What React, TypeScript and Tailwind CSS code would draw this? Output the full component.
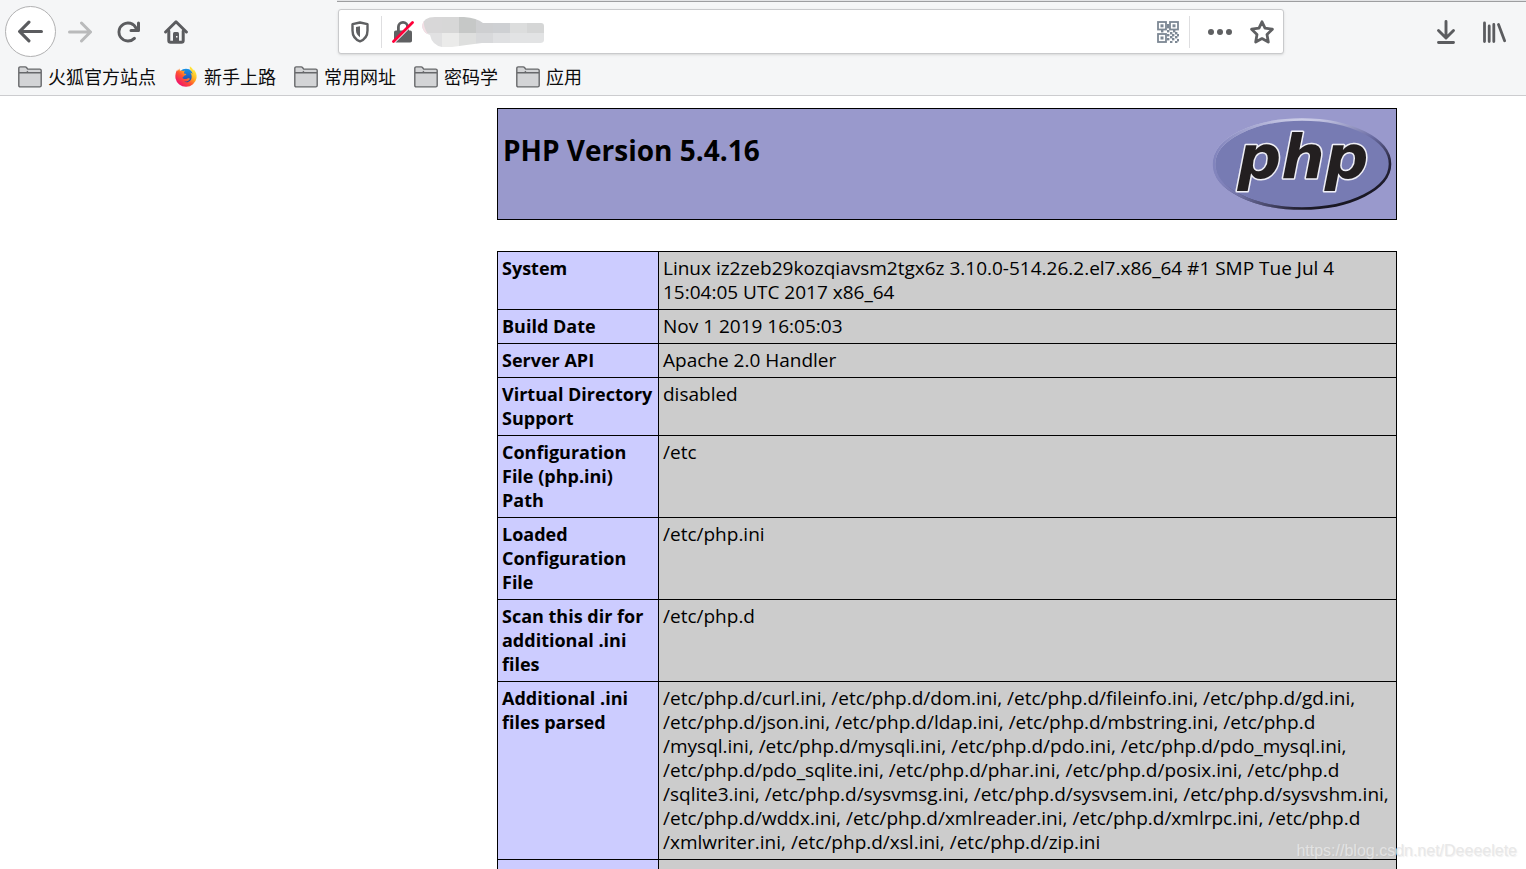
import type { ReactNode } from "react";

const BACK =
  "M15 7H3.414l4.293-4.293a1 1 0 0 0-1.414-1.414l-6 6a1 1 0 0 0 0 1.414l6 6a1 1 0 0 0 1.414-1.414L3.414 9H15a1 1 0 0 0 0-2z";
const RELOAD =
  "M15 1a1 1 0 0 0-1 1v2.418A6.995 6.995 0 1 0 8 15a6.954 6.954 0 0 0 4.95-2.05 1 1 0 0 0-1.414-1.414A5.019 5.019 0 1 1 12.549 6H10a1 1 0 0 0 0 2h5a1 1 0 0 0 1-1V2a1 1 0 0 0-1-1z";

function ToolButton({ label, children }: { label: string; children: ReactNode }) {
  return (
    <button type="button" aria-label={label} className="flex h-12 w-12 shrink-0 items-center justify-center text-[#5b5c5f]">
      {children}
    </button>
  );
}

function FolderIcon() {
  return (
    <svg width="24" height="24" viewBox="0 -2 24 24" fill="#d3d4d6" stroke="#67686b" strokeWidth="1.4" strokeLinejoin="round">
      <path d="M.8 19.500V2.300Q.8.900 2.200.900H7.200Q8 .9 8.500 1.500L9.700 3.100H21.800Q23.200 3.100 23.200 4.500V19.500Q23.200 20.900 21.800 20.900H2.200Q.8 20.900.8 19.500Z" />
      <path d="M1 6.800H7.500Q8.400 6.800 9 6.200L9.800 5.200M8 6.800H23" fill="none" />
    </svg>
  );
}

function FirefoxIcon() {
  return (
    <svg width="24" height="24" viewBox="-0.500 -1.500 25 25">
      <defs>
        <linearGradient id="fox" x1="0.85" y1="0.1" x2="0.15" y2="0.85">
          <stop offset="0" stopColor="#fff044" />
          <stop offset="0.35" stopColor="#ffb020" />
          <stop offset="0.62" stopColor="#ff5530" />
          <stop offset="1" stopColor="#f0146a" />
        </linearGradient>
        <linearGradient id="globe" x1="0" y1="0" x2="0" y2="1">
          <stop offset="0" stopColor="#1593e6" />
          <stop offset="1" stopColor="#2b2f9a" />
        </linearGradient>
      </defs>
      <circle cx="12" cy="12" r="8.500" fill="url(#globe)" />
      <path
        fill="url(#fox)"
        d="M16 .8C18 2 19 3.600 19.600 5.200C20 4.800 20 4.400 20 4C22.300 6.500 23.500 9.600 23 13A11.200 11.200 0 0 1 1 13.400C.6 9.800 1.400 6.500 3 4.200L3.300 6L5 3.300L5.700 5.500C7 5 8.500 5.200 9.400 5.700L11 5.300C10.200 6.300 9.800 7.200 9.800 8.400L12.300 8.900C12.300 10 10.600 10.400 9.900 11C9.700 12 8.700 12.200 8.300 12.700C9.400 14.600 12 14.300 13.600 13.500C15 13 16 13.500 16 14.100C14.500 16.500 11.500 17.200 9.600 16.500C13.500 19 18 16.500 17.900 11.500C17.900 9.500 17 8.200 16.300 7.300C17.800 7.800 18.600 8.500 19 9.200C18.500 6 15.200 4.500 16 .8Z"
      />
    </svg>
  );
}

function Bookmark({ label, icon }: { label: string; icon: ReactNode }) {
  return (
    <a href="#" className="flex items-center gap-[6px] whitespace-nowrap">
      {icon}
      {label}
    </a>
  );
}

function ShieldIcon() {
  return (
    <svg width="18" height="22" viewBox="0 0 18 22" fill="none">
      <path d="M9 1.500L16.500 3.200V9.500C16.500 14.800 13.200 18.700 9 20.400C4.800 18.700 1.500 14.800 1.500 9.500V3.200Z" stroke="#5f6062" strokeWidth="2.400" strokeLinejoin="round" />
      <path d="M9 5.200V16.200C6.500 14.500 5 12.200 5 9.500V6.100Z" fill="#5f6062" />
    </svg>
  );
}

function InsecureIcon() {
  return (
    <svg width="22" height="22" viewBox="0 0 22 22" fill="none">
      <path d="M6.400 10V6A4.600 4.600 0 0 1 15.600 6V10" stroke="#5f6062" strokeWidth="2.800" />
      <rect x="2" y="9.500" width="18" height="12" rx="1.800" fill="#5f6062" />
      <path d="M2 22L21 3" stroke="#fff" strokeWidth="1.500" />
      <path d="M1.500 20.500L20.500 1.500" stroke="#ff0039" strokeWidth="2.800" strokeLinecap="round" />
    </svg>
  );
}

function AddressBlur() {
  const cells: [number, number, number, number, string][] = [
    [0, 0, 20, 16, "#d8d7d8"],
    [20, 0, 17, 16, "#d7d7d7"],
    [37, 0, 17, 16, "#c6c8c7"],
    [54, 0, 17, 16, "#cecfd1"],
    [71, 0, 17, 16, "#ced0d3"],
    [88, 0, 17, 16, "#dcdddd"],
    [105, 0, 17, 16, "#d5d6d6"],
    [0, 16, 20, 14, "#e1e1e2"],
    [20, 16, 17, 14, "#ebebea"],
    [37, 16, 17, 14, "#dedfde"],
    [54, 16, 17, 14, "#d8d9db"],
    [71, 16, 17, 14, "#dfe0e2"],
    [88, 16, 34, 14, "#e2e3e4"],
  ];
  return (
    <svg width="122" height="30" viewBox="0 0 122 30">
      <clipPath id="smear">
        <path d="M0 9Q1 0 13 0H42Q55 1 61 6H119Q122 6 122 9V23Q122 26 118 26H60Q44 28 30 30H20Q10 28 8 18Q1 16 0 9Z" />
      </clipPath>
      <g clipPath="url(#smear)">
        {cells.map(([x, y, w, h, fill]) => (
          <rect key={`${x}-${y}`} x={x} y={y} width={w} height={h} fill={fill} />
        ))}
        <path d="M0 3H2Q1 10 6 17H0Z" fill="#f4dfe5" />
      </g>
    </svg>
  );
}

function QrIcon() {
  const dots = [
    [10, 3], [10, 5], [4, 9], [16, 9],
    [10, 9], [13, 11], [18, 11], [10, 13], [15, 13], [20, 13],
    [13, 15], [18, 15], [10, 17], [15, 17], [20, 18], [13, 20], [18, 20],
  ];
  return (
    <svg width="22" height="22" viewBox="0 0 22 22" fill="none" stroke="#7d8894" strokeWidth="1.800">
      <rect x="1" y="1" width="8" height="7.500" />
      <rect x="13" y="1" width="8" height="7.500" />
      <rect x="1" y="13" width="8" height="8" />
      <g fill="#7d8894" stroke="none">
        <rect x="3.500" y="3.300" width="3" height="3" />
        <rect x="15.500" y="3.300" width="3" height="3" />
        <rect x="3.500" y="15.500" width="3" height="3" />
        {dots.map(([x, y]) => (
          <rect key={`${x}-${y}`} x={x} y={y} width="2.400" height="2.400" />
        ))}
      </g>
    </svg>
  );
}

function PhpLogo() {
  return (
    <svg width="180" height="94" viewBox="0 0 180 94" role="img" aria-label="PHP logo">
      <defs>
        <linearGradient id="rim" x1="0.2" y1="0" x2="0.8" y2="1">
          <stop offset="0" stopColor="#e4e5f4" />
          <stop offset="0.18" stopColor="#c3c4e2" />
          <stop offset="0.45" stopColor="#6b6da4" />
          <stop offset="0.7" stopColor="#26243a" />
          <stop offset="1" stopColor="#15131c" />
        </linearGradient>
        <linearGradient id="rimSide" x1="0" y1="0" x2="1" y2="0">
          <stop offset="0" stopColor="#8284bd" />
          <stop offset="0.25" stopColor="#8284bd" stopOpacity="0.5" />
          <stop offset="0.5" stopColor="#8284bd" stopOpacity="0" />
        </linearGradient>
      </defs>
      <ellipse cx="90" cy="47" rx="88" ry="44.500" fill="#777bb3" stroke="url(#rim)" strokeWidth="2.600" />
      <ellipse cx="90" cy="47" rx="88" ry="44.500" fill="none" stroke="url(#rimSide)" strokeWidth="2.600" />
      <text
        x="91"
        y="61"
        textAnchor="middle"
        fontFamily="'DejaVu Sans', sans-serif"
        fontSize="61"
        fontWeight="700"
        fontStyle="italic"
        fill="#231f20"
        stroke="#efeff6"
        strokeWidth="3"
        strokeLinejoin="round"
        paintOrder="stroke"
      >
        php
      </text>
    </svg>
  );
}

const rows: { name: string[]; value: string[] }[] = [
  {
    name: ["System"],
    value: ["Linux iz2zeb29kozqiavsm2tgx6z 3.10.0-514.26.2.el7.x86_64 #1 SMP Tue Jul 4", "15:04:05 UTC 2017 x86_64"],
  },
  { name: ["Build Date"], value: ["Nov 1 2019 16:05:03"] },
  { name: ["Server API"], value: ["Apache 2.0 Handler"] },
  { name: ["Virtual Directory", "Support"], value: ["disabled"] },
  { name: ["Configuration", "File (php.ini)", "Path"], value: ["/etc"] },
  { name: ["Loaded", "Configuration", "File"], value: ["/etc/php.ini"] },
  { name: ["Scan this dir for", "additional .ini", "files"], value: ["/etc/php.d"] },
  {
    name: ["Additional .ini", "files parsed"],
    value: [
      "/etc/php.d/curl.ini, /etc/php.d/dom.ini, /etc/php.d/fileinfo.ini, /etc/php.d/gd.ini,",
      "/etc/php.d/json.ini, /etc/php.d/ldap.ini, /etc/php.d/mbstring.ini, /etc/php.d",
      "/mysql.ini, /etc/php.d/mysqli.ini, /etc/php.d/pdo.ini, /etc/php.d/pdo_mysql.ini,",
      "/etc/php.d/pdo_sqlite.ini, /etc/php.d/phar.ini, /etc/php.d/posix.ini, /etc/php.d",
      "/sqlite3.ini, /etc/php.d/sysvmsg.ini, /etc/php.d/sysvsem.ini, /etc/php.d/sysvshm.ini,",
      "/etc/php.d/wddx.ini, /etc/php.d/xmlreader.ini, /etc/php.d/xmlrpc.ini, /etc/php.d",
      "/xmlwriter.ini, /etc/php.d/xsl.ini, /etc/php.d/zip.ini",
    ],
  },
  { name: ["\u00a0"], value: ["\u00a0"] },
];

function Lines({ lines }: { lines: string[] }) {
  return (
    <>
      {lines.map((line) => (
        <span key={line} className="block whitespace-nowrap">
          {line}
        </span>
      ))}
    </>
  );
}

export default function App() {
  return (
    <div className="relative flex h-screen flex-col overflow-hidden bg-white font-['Open_Sans','Noto_Sans_CJK_SC',sans-serif] text-black">
      <header className="shrink-0 border-b border-[#cccccf] bg-[#f5f6f7]">
        <div className="ml-[337px] h-[2px] border-b border-[#9d9ea0] bg-[#e3e4e6]" />
        <div className="flex h-[59px] items-center pr-2 pl-[5px]">
          <button
            type="button"
            aria-label="后退"
            className="flex h-[51px] w-[51px] shrink-0 items-center justify-center rounded-full border border-[#b1b1b2] bg-white text-[#5b5c5f]"
          >
            <svg width="25" height="25" viewBox="0 0 16 16" fill="currentColor">
              <path d={BACK} />
            </svg>
          </button>
          <ToolButton label="前进">
            <svg width="24" height="24" viewBox="0 0 16 16" className="-scale-x-100 text-[#b9babb]" fill="currentColor">
              <path d={BACK} />
            </svg>
          </ToolButton>
          <ToolButton label="刷新">
            <svg width="24" height="24" viewBox="0 0 16 16" fill="currentColor">
              <path d={RELOAD} />
            </svg>
          </ToolButton>
          <ToolButton label="主页">
            <svg width="24" height="24" viewBox="0 0 24 24" fill="none" stroke="currentColor" strokeWidth="3" strokeLinecap="round" strokeLinejoin="round">
              <path d="M1.600 12L12 1.800L22.400 12" />
              <path d="M4.800 11V20.500Q4.800 22.300 6.600 22.300H17.400Q19.200 22.300 19.200 20.500V11" />
              <path d="M9 22V13.500Q9 12 10.500 12H13.500Q15 12 15 13.500V22Z" fill="currentColor" stroke="none" />
              <rect x="12" y="16" width="1.500" height="1.500" fill="#f5f6f7" stroke="none" />
            </svg>
          </ToolButton>
          <div className="mx-[138px] flex h-[45px] min-w-0 flex-1 items-center rounded-[3px] border border-[#c9cacc] bg-white pr-[9px] pl-3 shadow-sm">
            <ShieldIcon />
            <div className="mr-[10px] ml-3 h-8 w-px shrink-0 bg-[#dedee0]" />
            <InsecureIcon />
            <div className="ml-2 shrink-0">
              <AddressBlur />
            </div>
            <input type="text" aria-label="地址栏" className="h-full min-w-0 flex-1 bg-transparent text-lg outline-none" />
            <QrIcon />
            <div className="mr-[18px] ml-[10px] h-8 w-px shrink-0 bg-[#dedee0]" />
            <button type="button" aria-label="页面操作" className="shrink-0">
              <svg width="24" height="24" viewBox="0 0 24 24" fill="#5f6062">
                <circle cx="3" cy="12" r="3" />
                <circle cx="12" cy="12" r="3" />
                <circle cx="21" cy="12" r="3" />
              </svg>
            </button>
            <button type="button" aria-label="添加书签" className="ml-[18px] shrink-0">
              <svg width="24" height="24" viewBox="0 0 24 24" fill="none" stroke="#5f6062" strokeWidth="2.800" strokeLinejoin="round">
                <path d="M12 1.800L15 8.200L22.400 9.200L17 14.400L18.300 22L12 18.600L5.700 22L7 14.400L1.600 9.200L9 8.200Z" />
              </svg>
            </button>
          </div>
          <ToolButton label="下载">
            <svg width="24" height="24" viewBox="0 0 24 24" fill="none" stroke="currentColor" strokeWidth="2.900" strokeLinecap="round" strokeLinejoin="round">
              <path d="M12 1.500V17.500M4.500 10.500L12 18L19.500 10.500M4.500 22.500H19.500" />
            </svg>
          </ToolButton>
          <ToolButton label="我的足迹">
            <svg width="24" height="24" viewBox="0 0 24 24" fill="none" stroke="currentColor" strokeWidth="2.800" strokeLinecap="round">
              <path d="M2.500 3V21.500M7.200 6V21.500M11.800 4.500V21.500M16.500 4.500L22.600 20.800" />
            </svg>
          </ToolButton>
        </div>
        <nav className="flex h-[34px] items-center gap-[18px] pb-1 pl-[18px] font-['Noto_Sans_CJK_SC',sans-serif] text-[18px] leading-6 font-normal text-[#0c0c0d]">
          <Bookmark label="火狐官方站点" icon={<FolderIcon />} />
          <Bookmark label="新手上路" icon={<FirefoxIcon />} />
          <Bookmark label="常用网址" icon={<FolderIcon />} />
          <Bookmark label="密码学" icon={<FolderIcon />} />
          <Bookmark label="应用" icon={<FolderIcon />} />
        </nav>
      </header>

      <main className="flex flex-col items-end gap-[31px] pt-3 pr-[129px] pl-4">
        <div className="flex h-[112px] w-full max-w-[900px] items-start justify-between border border-black bg-[#9999cc] py-2 pr-1 pl-[5px]">
          <h1 className="pt-[15px] text-[28px] leading-9 font-bold">PHP Version 5.4.16</h1>
          <PhpLogo />
        </div>
        <table className="w-full max-w-[900px] table-fixed border-collapse text-left leading-6">
          <colgroup>
            <col className="w-[161px]" />
            <col />
          </colgroup>
          <tbody>
            {rows.map((row) => (
              <tr key={row.name.join(" ")}>
                <th scope="row" className="border border-black bg-[#ccccff] px-1 pt-1 pb-[5px] align-top text-[18px] leading-6 font-bold">
                  <Lines lines={row.name} />
                </th>
                <td className="border border-black bg-[#cccccc] px-1 pt-1 pb-[5px] align-top text-[19px] leading-6">
                  <Lines lines={row.value} />
                </td>
              </tr>
            ))}
          </tbody>
        </table>
      </main>

      <div className="absolute right-[9px] bottom-[6px] font-['Liberation_Sans',sans-serif] text-base leading-6 text-[#e6e6e6]/90 [text-shadow:1px_1px_1px_rgba(150,150,150,0.15)]">
        https://blog.csdn.net/Deeeelete
      </div>
    </div>
  );
}
